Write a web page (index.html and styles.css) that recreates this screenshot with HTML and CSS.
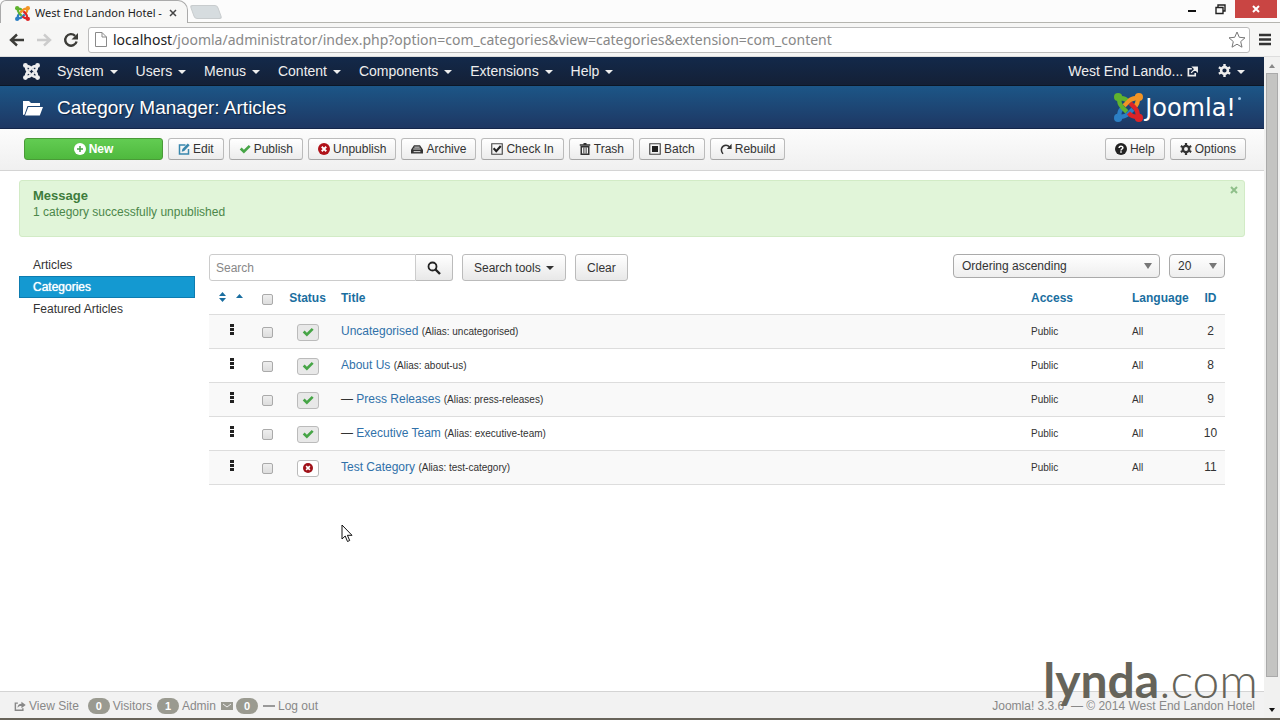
FILE: index.html
```html
<!DOCTYPE html>
<html lang="en">

<head>
    <meta charset="utf-8">
    <title>West End Landon Hotel - Category Manager</title>
    <link rel="stylesheet" href="styles.css">
</head>

<body>
    <svg class="sprite" aria-hidden="true">
        <symbol id="arm" viewBox="0 0 24 24">
            <circle cx="3.400" cy="3.400" r="3.400" fill="currentColor" />
            <path d="M12 7.400C9.500 4.600 7 4 4.600 4.600C4 7 4.600 9.500 7 12L10.600 15.600" fill="none" stroke="currentColor" stroke-width="3.600" />
        </symbol>
        <symbol id="joomla" viewBox="0 0 24 24">
            <use href="#arm" class="arm-blue" transform="rotate(270 12 12)" />
            <use href="#arm" class="arm-green" />
            <use href="#arm" class="arm-orange" transform="rotate(90 12 12)" />
            <use href="#arm" class="arm-red" transform="rotate(180 12 12)" />
        </symbol>
        <symbol id="joomla-plain" viewBox="0 0 24 24">
            <use href="#arm" />
            <use href="#arm" transform="rotate(90 12 12)" />
            <use href="#arm" transform="rotate(180 12 12)" />
            <use href="#arm" transform="rotate(270 12 12)" />
        </symbol>
        <symbol id="gear" viewBox="0 0 16 16">
            <circle cx="8" cy="8" r="4.200" fill="none" stroke="currentColor" stroke-width="3.200" />
            <path d="M6.500 0h3v3h-3zM6.500 13h3v3h-3z" fill="currentColor" />
            <path d="M6.500 0h3v3h-3zM6.500 13h3v3h-3z" fill="currentColor" transform="rotate(60 8 8)" />
            <path d="M6.500 0h3v3h-3zM6.500 13h3v3h-3z" fill="currentColor" transform="rotate(120 8 8)" />
        </symbol>
        <symbol id="check" viewBox="0 0 16 16">
            <path d="M1 8.500L3.500 6l3 3L13 2.500L15.500 5l-9 9z" fill="currentColor" />
        </symbol>
        <symbol id="cross" viewBox="0 0 16 16">
            <circle cx="8" cy="8" r="8" fill="currentColor" />
            <path d="M5 5l6 6M11 5l-6 6" stroke="#fff" stroke-width="2.500" />
        </symbol>
        <symbol id="folder" viewBox="0 0 20 16">
            <path d="M0 15V1h6l2 2h9v3H4.500L1.500 14.500zM5.300 7H20l-3.200 8.500H2z" fill="currentColor" />
        </symbol>
        <symbol id="external" viewBox="0 0 16 16">
            <path d="M7 4H2v10h10v-4" fill="none" stroke="currentColor" stroke-width="2.400" />
            <path d="M6 10L12 4M8.500 1.500H15V8z" fill="currentColor" stroke="currentColor" stroke-width="1.800" />
        </symbol>
        <symbol id="share" viewBox="0 0 16 14">
            <path d="M5 3H1.500v10h10.500v-3" fill="none" stroke="currentColor" stroke-width="2" />
            <path d="M4.500 9.500C4.500 6 7 4 10 4V1l6 4.500L10 10V7C7.500 7 6 7.500 4.500 9.500z" fill="currentColor" />
        </symbol>
        <symbol id="file" viewBox="0 0 12 15">
            <path d="M.5.500H7L11.500 5v9.500H.5zM7 .5V5h4.500" fill="#fff" stroke="#8a8a8a" />
        </symbol>
    </svg>

    <header class="browser">
        <div class="tabs">
            <div class="tab">
                <svg width="15" height="15"><use href="#joomla" /></svg>
                <span class="tab-title">West End Landon Hotel -</span>
                <button class="bare" aria-label="Close tab">
                    <svg width="8" height="8" viewBox="0 0 8 8"><path d="M1 1l6 6M7 1L1 7" stroke="#444" stroke-width="1.500" /></svg>
                </button>
            </div>
            <button class="new-tab" aria-label="New tab"></button>
            <div class="window-buttons">
                <button class="bare" aria-label="Minimize">
                    <svg width="10" height="12" viewBox="0 0 10 12"><path d="M1 6h8v2H1z" fill="#111" /></svg>
                </button>
                <button class="bare" aria-label="Restore">
                    <svg width="11" height="11" viewBox="0 0 11 11"><path d="M1 3.500h7v6H1zM3 3V1h7v6H8" fill="none" stroke="#222" stroke-width="1.400" /></svg>
                </button>
                <button class="window-close" aria-label="Close window">
                    <svg width="8" height="8" viewBox="0 0 8 8"><path d="M1 1l6 6M7 1L1 7" stroke="#fff" stroke-width="2" /></svg>
                </button>
            </div>
        </div>
        <div class="toolbar">
            <button class="bare" aria-label="Back">
                <svg width="16" height="14" viewBox="0 0 16 14"><path d="M15 7H3M8 1.500L2 7l6 5.500" fill="none" stroke="#3c3c38" stroke-width="2.400" /></svg>
            </button>
            <button class="bare" aria-label="Forward">
                <svg width="16" height="14" viewBox="0 0 16 14"><path d="M1 7h12M8 1.500L14 7l-6 5.500" fill="none" stroke="#ccc" stroke-width="2.400" /></svg>
            </button>
            <button class="bare" aria-label="Reload">
                <svg width="16" height="16" viewBox="0 0 16 16"><path d="M13.600 9.500a5.800 5.800 0 1 1-1.500-5.700" fill="none" stroke="#3c3c38" stroke-width="2.400" /><path d="M15 1v6.500H8.500z" fill="#3c3c38" /></svg>
            </button>
            <div class="address">
                <svg width="12" height="15"><use href="#file" /></svg>
                <span class="url"><b>localhost</b>/joomla/administrator/index.php?option=com_categories&amp;view=categories&amp;extension=com_content</span>
                <button class="bare" aria-label="Bookmark this page">
                    <svg width="18" height="17" viewBox="0 0 18 17"><path d="M9 1l2.300 5.300 5.700.5-4.300 3.800 1.300 5.600L9 13.200l-5 3 1.300-5.600L1 6.800l5.700-.5z" fill="#fff" stroke="#777" /></svg>
                </button>
            </div>
            <button class="bare" aria-label="Menu">
                <svg width="12" height="13" viewBox="0 0 12 13"><path d="M0 2h12M0 6.500h12M0 11h12" stroke="#333" stroke-width="2.600" /></svg>
            </button>
        </div>
    </header>

    <div class="viewport">
        <div class="page">
            <nav class="navbar">
                <a class="brand" href="#" aria-label="Joomla"><svg width="17" height="17"><use href="#joomla-plain" /></svg></a>
                <ul class="menu">
                    <li><a href="#">System <i class="caret"></i></a></li>
                    <li><a href="#">Users <i class="caret"></i></a></li>
                    <li><a href="#">Menus <i class="caret"></i></a></li>
                    <li><a href="#">Content <i class="caret"></i></a></li>
                    <li><a href="#">Components <i class="caret"></i></a></li>
                    <li><a href="#">Extensions <i class="caret"></i></a></li>
                    <li><a href="#">Help <i class="caret"></i></a></li>
                </ul>
                <a class="site-link" href="#">West End Lando... <svg width="11" height="11"><use href="#external" /></svg></a>
                <a href="#" aria-label="User settings"><svg width="13" height="13"><use href="#gear" /></svg> <i class="caret"></i></a>
            </nav>

            <header class="title-bar">
                <svg width="20" height="16"><use href="#folder" /></svg>
                <h1>Category Manager: Articles</h1>
                <div class="logo">
                    <svg width="29" height="29"><use href="#joomla" /></svg>
                    <span>Joomla!</span><i class="mark"></i>
                </div>
            </header>

            <div class="subhead">
                <button class="btn btn-new">
                    <svg width="12" height="12" viewBox="0 0 16 16"><circle cx="8" cy="8" r="8" fill="#fff" /><path d="M8 4v8M4 8h8" stroke="#46a546" stroke-width="2" /></svg>
                    New
                </button>
                <button class="btn">
                    <svg width="12" height="12" viewBox="0 0 16 16"><path d="M10 2.500H2v12h12V8" fill="none" stroke="#3a87ad" stroke-width="2" /><path d="M5 11.500l.8-3.500L13 .8 15.500 3 8.300 10.500z" fill="#3a87ad" /></svg>
                    Edit
                </button>
                <button class="btn"><svg class="green" width="12" height="12"><use href="#check" /></svg> Publish</button>
                <button class="btn"><svg class="red" width="12" height="12"><use href="#cross" /></svg> Unpublish</button>
                <button class="btn">
                    <svg width="12" height="12" viewBox="0 0 16 16"><path d="M4 3h8l4 6v5H0V9z" fill="#333" /><path d="M4.500 5.500h7M3 8h10M3.500 11.500h9" stroke="#eee" stroke-width="1.200" /></svg>
                    Archive
                </button>
                <button class="btn">
                    <svg width="12" height="12" viewBox="0 0 16 16"><path d="M1 1h14v14H1z" fill="none" stroke="#444" stroke-width="1.500" /><path d="M3.500 7l3.500 4 6-7" fill="none" stroke="#222" stroke-width="2.800" /></svg>
                    Check In
                </button>
                <button class="btn">
                    <svg width="12" height="12" viewBox="0 0 16 16"><path d="M1 2.500h14M6 1h4M3 5v10h10V5z" fill="none" stroke="#333" stroke-width="2" /><path d="M6.500 6v8M9.500 6v8" stroke="#333" stroke-width="1.300" /></svg>
                    Trash
                </button>
                <button class="btn">
                    <svg width="12" height="12" viewBox="0 0 16 16"><path d="M1 1h14v14H1z" fill="none" stroke="#444" stroke-width="1.500" /><path d="M4 4h8v8H4z" fill="#222" /></svg>
                    Batch
                </button>
                <button class="btn">
                    <svg width="12" height="12" viewBox="0 0 16 16"><path d="M4 14.500C0 10 2 3 8 3c2 0 3.500.8 5 2.500" fill="none" stroke="#333" stroke-width="2" /><path d="M15.500 1v7H9z" fill="#333" /></svg>
                    Rebuild
                </button>
                <button class="btn btn-help">
                    <svg width="12" height="12" viewBox="0 0 16 16"><circle cx="8" cy="8" r="8" fill="#222" /><path d="M5.500 6.500C5.500 3.500 10.500 3.500 10.500 6.300C10.500 8 8 8 8 10M8 11v2" fill="none" stroke="#fff" stroke-width="2" /></svg>
                    Help
                </button>
                <button class="btn"><svg width="12" height="12"><use href="#gear" /></svg> Options</button>
            </div>

            <div class="alert">
                <button class="bare" aria-label="Close message">
                    <svg width="8" height="8" viewBox="0 0 8 8"><path d="M1 1l6 6M7 1L1 7" stroke="#8fbf8a" stroke-width="2" /></svg>
                </button>
                <h4>Message</h4>
                <p>1 category successfully unpublished</p>
            </div>

            <div class="content">
                <ul class="sidebar">
                    <li><a href="#">Articles</a></li>
                    <li class="active"><a href="#">Categories</a></li>
                    <li><a href="#">Featured Articles</a></li>
                </ul>

                <main>
                    <form class="filters">
                        <div class="search">
                            <input type="text" placeholder="Search" aria-label="Search">
                            <button type="button" class="btn-large" aria-label="Search">
                                <svg width="14" height="14" viewBox="0 0 14 14"><circle cx="5.500" cy="5.500" r="4" fill="none" stroke="#222" stroke-width="1.800" /><path d="M8.500 8.500l4.500 4.500" stroke="#222" stroke-width="2.400" /></svg>
                            </button>
                        </div>
                        <button type="button" class="btn-large">Search tools <i class="caret"></i></button>
                        <button type="button" class="btn-large">Clear</button>
                        <div class="select select-order">
                            <select aria-label="Sort by">
                                <option>Ordering ascending</option>
                            </select>
                        </div>
                        <div class="select select-limit">
                            <select aria-label="Items per page">
                                <option>20</option>
                            </select>
                        </div>
                    </form>

                    <table>
                        <thead>
                            <tr>
                                <th class="col-order">
                                    <a href="#" aria-label="Ordering">
                                        <svg width="26" height="10" viewBox="0 0 26 10"><path d="M1 4l3.500-4L8 4zM1 6l3.500 4L8 6zM18 6l3.500-4L25 6z" fill="#1a6ea0" /></svg>
                                    </a>
                                </th>
                                <th class="col-check"><input type="checkbox" aria-label="Check all"></th>
                                <th class="col-status"><a href="#">Status</a></th>
                                <th><a href="#">Title</a></th>
                                <th class="col-access"><a href="#">Access</a></th>
                                <th class="col-language"><a href="#">Language</a></th>
                                <th class="col-id"><a href="#">ID</a></th>
                            </tr>
                        </thead>
                        <tbody>
                            <tr>
                                <td class="col-order"><i class="grip"></i></td>
                                <td class="col-check"><input type="checkbox" aria-label="Uncategorised"></td>
                                <td class="col-status"><button class="state on" aria-label="Published"><svg width="12" height="12"><use href="#check" /></svg></button></td>
                                <td><a href="#">Uncategorised</a> <small>(Alias: uncategorised)</small></td>
                                <td><small>Public</small></td>
                                <td><small>All</small></td>
                                <td class="col-id">2</td>
                            </tr>
                            <tr>
                                <td class="col-order"><i class="grip"></i></td>
                                <td class="col-check"><input type="checkbox" aria-label="About Us"></td>
                                <td class="col-status"><button class="state on" aria-label="Published"><svg width="12" height="12"><use href="#check" /></svg></button></td>
                                <td><a href="#">About Us</a> <small>(Alias: about-us)</small></td>
                                <td><small>Public</small></td>
                                <td><small>All</small></td>
                                <td class="col-id">8</td>
                            </tr>
                            <tr>
                                <td class="col-order"><i class="grip"></i></td>
                                <td class="col-check"><input type="checkbox" aria-label="Press Releases"></td>
                                <td class="col-status"><button class="state on" aria-label="Published"><svg width="12" height="12"><use href="#check" /></svg></button></td>
                                <td>&mdash; <a href="#">Press Releases</a> <small>(Alias: press-releases)</small></td>
                                <td><small>Public</small></td>
                                <td><small>All</small></td>
                                <td class="col-id">9</td>
                            </tr>
                            <tr>
                                <td class="col-order"><i class="grip"></i></td>
                                <td class="col-check"><input type="checkbox" aria-label="Executive Team"></td>
                                <td class="col-status"><button class="state on" aria-label="Published"><svg width="12" height="12"><use href="#check" /></svg></button></td>
                                <td>&mdash; <a href="#">Executive Team</a> <small>(Alias: executive-team)</small></td>
                                <td><small>Public</small></td>
                                <td><small>All</small></td>
                                <td class="col-id">10</td>
                            </tr>
                            <tr>
                                <td class="col-order"><i class="grip"></i></td>
                                <td class="col-check"><input type="checkbox" aria-label="Test Category"></td>
                                <td class="col-status"><button class="state off" aria-label="Unpublished"><svg width="10" height="10"><use href="#cross" /></svg></button></td>
                                <td><a href="#">Test Category</a> <small>(Alias: test-category)</small></td>
                                <td><small>Public</small></td>
                                <td><small>All</small></td>
                                <td class="col-id">11</td>
                            </tr>
                        </tbody>
                    </table>
                </main>
            </div>

            <footer class="status">
                <a class="count" href="#"><svg width="12" height="10"><use href="#share" /></svg> View Site</a>
                <span class="count"><b class="badge">0</b> Visitors</span>
                <span class="count"><b class="badge">1</b> Admin</span>
                <a class="count" href="#" aria-label="Messages"><svg width="12" height="8" viewBox="0 0 12 8"><path d="M0 0h12v8H0z" fill="#999990" /><path d="M2 2l4 3 4-3" fill="none" stroke="#eee" /></svg><b class="badge">0</b></a>
                <a class="count" href="#"><i class="dash"></i> Log out</a>
                <span class="copyright">Joomla! 3.3.6 &nbsp;&mdash; &copy; 2014 West End Landon Hotel</span>
            </footer>
        </div>

        <div class="scrollbar">
            <i class="scroll-up"></i>
            <i class="scroll-thumb"></i>
            <i class="scroll-down"></i>
        </div>
    </div>

    <div class="watermark"><b>lynda</b>.com</div>
    <svg class="pointer" width="12" height="19" viewBox="0 0 12 19"><path d="M1 1v14l3.200-3 2.300 5.500 2.200-1-2.300-5.200H11z" fill="#fff" stroke="#111" /></svg>
</body>

</html>
```
FILE: styles.css
```css
* {
    box-sizing: border-box;
}

body {
    margin: 0;
    height: 100vh;
    display: flex;
    flex-direction: column;
    overflow: hidden;
    border-bottom: 2px solid #68645a;
    background: #fff;
    color: #333;
    font: 12px/18px "Liberation Sans", Arial, sans-serif;
}

a {
    color: #3071a9;
    text-decoration: none;
}

button,
input,
select {
    font: inherit;
    color: inherit;
}

svg {
    flex: none;
}

ul {
    list-style: none;
    margin: 0;
    padding: 0;
}

.sprite {
    position: absolute;
    width: 0;
    height: 0;
}

.arm-green { color: #5fb32e; }
.arm-orange { color: #f29425; }
.arm-red { color: #dc2427; }
.arm-blue { color: #2c7fc4; }
.green { color: #46a546; }
.red { color: #b01219; }

.bare {
    display: flex;
    padding: 0;
    border: 0;
    background: none;
}

.caret {
    display: inline-block;
    border: 4px solid transparent;
    border-top-color: currentColor;
    border-bottom: 0;
    margin-left: 2px;
    vertical-align: middle;
}

/* browser frame */

.tabs {
    display: flex;
    height: 23px;
    background: #fcfcfc;
    border-bottom: 1px solid #b5b5b0;
}

.tab {
    display: flex;
    align-items: center;
    gap: 5px;
    width: 188px;
    height: 23px;
    padding: 2px 10px 0 14px;
    background: #f7f7f6;
    border: 1px solid #aaa;
    border-bottom: 0;
    border-radius: 6px 10px 0 0;
    color: #222;
}

.tab-title {
    flex: 1;
    overflow: hidden;
    white-space: nowrap;
    font: 11px/16px "Noto Sans", sans-serif;
}

.new-tab {
    width: 28px;
    height: 14px;
    margin: 5px 0 0 4px;
    padding: 0;
    border: 1px solid #c8ccce;
    border-radius: 3px;
    background: #d6dcdf;
    transform: skewX(20deg);
}

.window-buttons {
    display: flex;
    align-items: flex-start;
    gap: 18px;
    margin-left: auto;
    padding-right: 3px;
}

.window-buttons .bare {
    margin-top: 4px;
}

.window-close {
    display: flex;
    align-items: center;
    justify-content: center;
    width: 42px;
    height: 18px;
    margin-left: -9px;
    padding: 0;
    border: 0;
    background: #c94543;
}

.toolbar {
    display: flex;
    align-items: center;
    gap: 11px;
    height: 34px;
    padding: 0 9px;
    background: #f6f6f5;
    border-bottom: 1px solid #ddd;
}

.address {
    flex: 1;
    display: flex;
    align-items: center;
    gap: 6px;
    height: 26px;
    margin: 0 -2px;
    padding: 0 3px 0 6px;
    background: #fff;
    border: 1px solid #bbb;
    border-radius: 3px;
}

.url {
    flex: 1;
    color: #888;
    font: 14px/20px "Noto Sans", sans-serif;
}

.url b {
    color: #222;
    font-weight: normal;
}

.viewport {
    flex: 1;
    display: flex;
    min-height: 0;
}

.page {
    flex: 1;
    display: flex;
    flex-direction: column;
    min-width: 0;
}

.scrollbar {
    display: flex;
    flex-direction: column;
    align-items: center;
    width: 16px;
    padding: 7px 2px 6px;
    background: #f1f1f0;
}

.scroll-up,
.scroll-down {
    border: 3px solid transparent;
}

.scroll-up {
    border-top: 0;
    border-bottom: 4px solid #888;
}

.scroll-down {
    border-top: 4px solid #111;
    border-bottom: 0;
}

.scroll-thumb {
    flex: 1;
    width: 12px;
    margin: 5px 0 31px;
    background: #c4c4c2;
    border: 1px solid #aaa;
}

/* administrator header */

.navbar {
    display: flex;
    align-items: center;
    height: 29px;
    padding: 0 19px 0 23px;
    background: linear-gradient(#13294a, #142036);
    border-bottom: 1px solid #0c1726;
    font-size: 14px;
}

.navbar a {
    color: #eee;
}

.navbar svg {
    vertical-align: -1px;
}

.brand {
    display: flex;
    width: 34px;
}

.menu {
    display: flex;
    gap: 18px;
}

.site-link {
    margin-left: auto;
    margin-right: 20px;
}

.title-bar {
    display: flex;
    align-items: center;
    gap: 14px;
    height: 43px;
    padding: 1px 23px 0;
    background: linear-gradient(#1c5687, #1e3763);
    border-bottom: 1px solid #14264a;
    color: #fff;
}

h1 {
    margin: 0;
    font-size: 19px;
    font-weight: normal;
    line-height: 24px;
    text-shadow: 1px 1px 1px #0f2340;
}

.logo {
    display: flex;
    align-items: center;
    gap: 2px;
    height: 36px;
    margin-left: auto;
    font: 24px/28px "DejaVu Sans", sans-serif;
}

.mark {
    width: 3px;
    height: 3px;
    margin-bottom: 18px;
    border-radius: 2px;
    background: #a8cdf0;
}

.subhead {
    display: flex;
    align-items: flex-start;
    gap: 5px;
    height: 42px;
    padding: 9px 18px 0 24px;
    background: linear-gradient(#fcfcfc, #f0f0f0);
    border-bottom: 1px solid #d4d4d4;
}

.btn {
    display: flex;
    align-items: center;
    gap: 3px;
    height: 22px;
    padding: 0 9px;
    border: 1px solid #bbb;
    border-bottom-color: #a5a5a5;
    border-radius: 3px;
    background: linear-gradient(#fff, #ececec);
    white-space: nowrap;
}

.btn-new {
    justify-content: center;
    width: 139px;
    border-color: #4a9a38;
    background: linear-gradient(#62cc52, #4fb93e);
    color: #fff;
    font-weight: bold;
}

.btn-help {
    margin-left: auto;
}

/* message */

.alert {
    height: 57px;
    margin: 9px 19px 0;
    padding: 7px 13px;
    background: #e1f5d9;
    border: 1px solid #d2ebc6;
    border-radius: 3px;
    color: #4c874a;
    line-height: 16px;
}

.alert .bare {
    float: right;
    margin-right: -7px;
    margin-top: -2px;
}

.alert h4,
.alert p {
    margin: 0;
}

.alert h4 {
    color: #3d7c3b;
    font-size: 13px;
}

/* sidebar and list */

.content {
    flex: 1;
    display: flex;
    gap: 14px;
    padding: 17px 39px 0 19px;
}

.sidebar {
    width: 176px;
}

.sidebar a {
    display: block;
    padding: 2px 14px;
    color: #333;
}

.sidebar .active a {
    background: #1499d1;
    border: 1px solid #0d7cb0;
    padding: 1px 13px;
    color: #fff;
    text-shadow: 0 0 1px #fff;
}

main {
    flex: 1;
}

.filters {
    display: flex;
    align-items: flex-start;
    gap: 9px;
    height: 30px;
}

.search {
    display: flex;
}

.search input {
    width: 207px;
    height: 27px;
    padding: 0 6px;
    border: 1px solid #ccc;
    border-radius: 3px 0 0 3px;
    background: #fff;
}

.search input::placeholder {
    color: #888;
}

.btn-large {
    height: 27px;
    padding: 0 11px;
    border: 1px solid #bbb;
    border-radius: 3px;
    background: linear-gradient(#fff, #e8e8e8);
}

.search .btn-large {
    display: flex;
    align-items: center;
    border-left: 0;
    border-radius: 0 3px 3px 0;
}

.select {
    position: relative;
}

.select::after {
    content: "";
    position: absolute;
    right: 8px;
    top: 9px;
    border: 4px solid transparent;
    border-top: 6px solid #777;
    border-bottom: 0;
    pointer-events: none;
}

.select select {
    appearance: none;
    width: 100%;
    height: 24px;
    padding: 0 8px;
    border: 1px solid #aaa;
    border-radius: 4px;
    background: linear-gradient(#fff, #eee);
}

.select-order {
    width: 207px;
    margin-left: auto;
}

.select-limit {
    width: 56px;
}

table {
    width: 100%;
    table-layout: fixed;
    border-collapse: collapse;
}

th {
    height: 30px;
    padding: 0 0 2px;
    text-align: left;
}

th a {
    color: #1a6ea0;
}

td {
    height: 34px;
    padding: 0;
    border-top: 1px solid #ddd;
    border-bottom: 1px solid #ddd;
}

tbody tr:nth-child(odd) {
    background: #f9f9f9;
}

small {
    font-size: 10px;
}

.col-order {
    width: 46px;
}

th.col-order {
    padding-left: 9px;
}

.col-check {
    width: 24px;
    text-align: center;
}

.col-status {
    width: 62px;
    padding-right: 5px;
    text-align: center;
}

.col-access {
    width: 101px;
}

.col-language {
    width: 64px;
}

.col-id {
    width: 29px;
    text-align: center;
}

.col-check input {
    appearance: none;
    display: block;
    width: 11px;
    height: 11px;
    margin: 3px auto 0;
    border: 1px solid #aaa;
    border-radius: 2px;
    background: linear-gradient(#eee, #ddd);
}

.grip {
    display: block;
    width: 4px;
    height: 12px;
    margin: 0 auto 2px;
    background: repeating-linear-gradient(#222 0 3px, transparent 3px 4px);
}

.state {
    display: flex;
    align-items: center;
    justify-content: center;
    width: 22px;
    height: 17px;
    margin: 2px auto 0;
    padding: 0;
    border: 1px solid #bbb;
    border-radius: 3px;
    background: #fff;
}

.state.on {
    background: #e8e8e8;
    color: #46a546;
}

.state.off {
    color: #a01219;
}

/* status bar */

.status {
    display: flex;
    align-items: center;
    gap: 5px;
    height: 27px;
    padding: 2px 9px 0 14px;
    background: #f2f2f2;
    border-top: 1px solid #d4d4d4;
    color: #888;
}

.status a {
    color: #888;
}

.status a:first-child {
    margin-right: 4px;
}

.count {
    display: flex;
    align-items: center;
    gap: 3px;
}

.badge {
    width: 22px;
    border-radius: 8px;
    background: #9a9a90;
    color: #fff;
    font-size: 11px;
    line-height: 16px;
    text-align: center;
}

.dash {
    width: 12px;
    height: 2px;
    background: #999;
}

.copyright {
    margin-left: auto;
}

.watermark {
    position: absolute;
    right: 22px;
    bottom: 14px;
    color: #66645a;
    font: 300 48px/52px Lato, sans-serif;
}

.watermark b {
    font-weight: 700;
}

.pointer {
    position: absolute;
    left: 341px;
    top: 524px;
}
```
